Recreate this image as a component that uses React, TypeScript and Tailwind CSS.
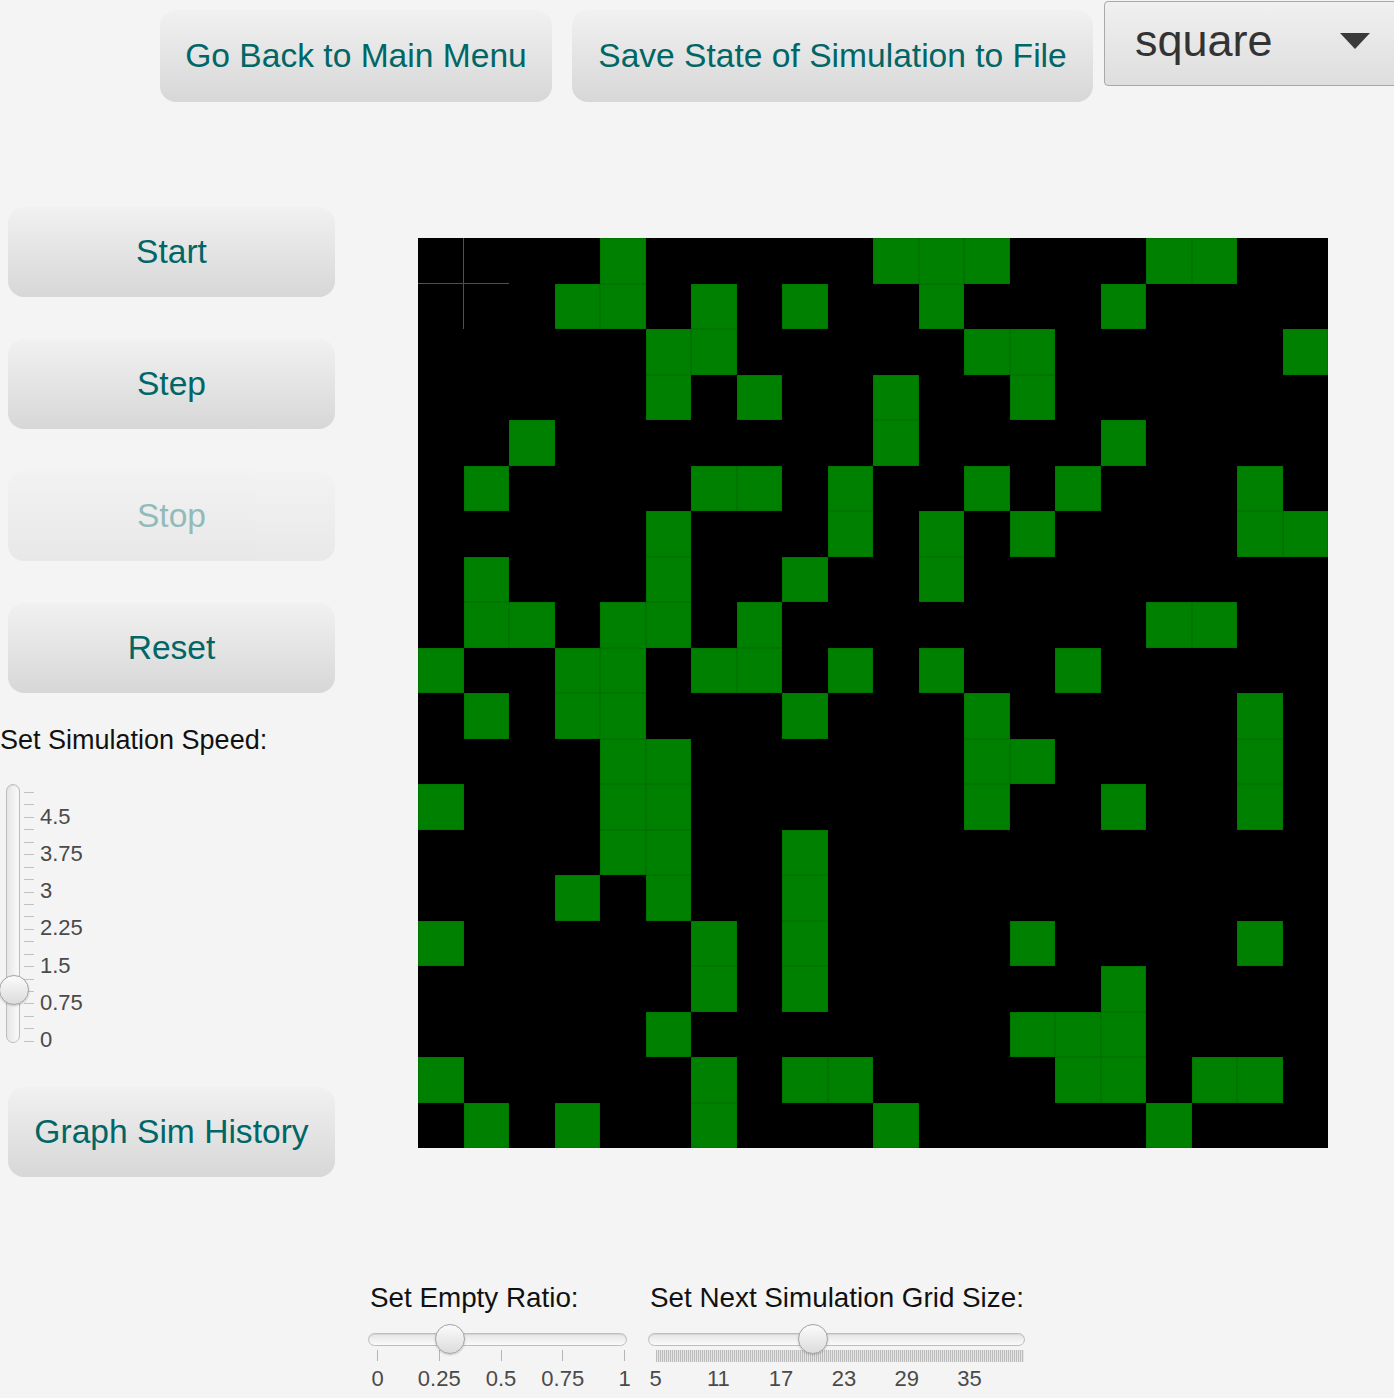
const GREEN: Record<number, number[]> = {
  0: [4, 10, 11, 12, 16, 17],
  1: [3, 4, 6, 8, 11, 15],
  2: [5, 6, 12, 13, 19],
  3: [5, 7, 10, 13],
  4: [2, 10, 15],
  5: [1, 6, 7, 9, 12, 14, 18],
  6: [5, 9, 11, 13, 18, 19],
  7: [1, 5, 8, 11],
  8: [1, 2, 4, 5, 7, 16, 17],
  9: [0, 3, 4, 6, 7, 9, 11, 14],
  10: [1, 3, 4, 8, 12, 18],
  11: [4, 5, 12, 13, 18],
  12: [0, 4, 5, 12, 15, 18],
  13: [4, 5, 8],
  14: [3, 5, 8],
  15: [0, 6, 8, 13, 18],
  16: [6, 8, 15],
  17: [5, 13, 14, 15],
  18: [0, 6, 8, 9, 14, 15, 17, 18],
  19: [1, 3, 6, 10, 16],
};

const speedLabels = ["4.5", "3.75", "3", "2.25", "1.5", "0.75", "0"];
const ratioLabels = ["0", "0.25", "0.5", "0.75", "1"];
const sizeLabels = ["5", "11", "17", "23", "29", "35"];

const Button = ({
  label,
  className,
  disabled,
}: {
  label: string;
  className?: string;
  disabled?: boolean;
}) => (
  <button
    className={`flex shrink-0 items-center justify-center rounded-[16px] bg-linear-to-b from-[#f1f1f1] to-[#d7d7d7] text-[33.6px] text-[#006666] ${
      disabled ? "opacity-40" : ""
    } ${className ?? ""}`}
  >
    {label}
  </button>
);

const Thumb = ({ className }: { className: string }) => (
  <div
    className={`absolute h-[30px] w-[30px] rounded-full border border-[#a3a3a3] bg-linear-to-b from-[#fbfbfb] to-[#dcdcdc] shadow-[0_1px_2px_rgba(0,0,0,0.2)] ${className}`}
  />
);

const Track = ({ className }: { className: string }) => (
  <div
    className={`rounded-full border border-[#bdbdbd] bg-linear-to-b from-[#e6e6e6] to-[#fafafa] shadow-[inset_0_1px_1px_rgba(0,0,0,0.08)] ${className}`}
  />
);

export default function App() {
  return (
    <div className="h-[1398px] w-[1394px] overflow-hidden bg-[#f4f4f4] font-['Liberation_Sans',Arial,sans-serif]">
      {/* top bar */}
      <div className="flex items-start">
        <Button label="Go Back to Main Menu" className="ml-[160px] mt-[10px] h-[92px] w-[392px]" />
        <Button
          label="Save State of Simulation to File"
          className="ml-[20px] mt-[10px] h-[92px] w-[521px]"
        />
        <div className="ml-[11px] mt-[1px] flex h-[85px] w-[300px] shrink-0 items-center rounded-[4px] border border-[#a9a9a9] bg-linear-to-b from-[#f0f0f0] to-[#dedede] pl-[30px]">
          <span className="-mt-[6px] text-[45px] leading-none text-[#333]">square</span>
          <svg width="30" height="16" viewBox="0 0 30 16" className="-mt-[6px] ml-[67px]">
            <polygon points="0,0 30,0 15,16" fill="#3a3a3a" />
          </svg>
        </div>
      </div>

      {/* main */}
      <div className="mt-[105px] flex items-start">
        <div className="flex w-[336px] shrink-0 flex-col">
          <Button label="Start" className="ml-[8px] h-[90px] w-[327px]" />
          <Button label="Step" className="ml-[8px] mt-[42px] h-[90px] w-[327px]" />
          <Button label="Stop" disabled className="ml-[8px] mt-[42px] h-[90px] w-[327px]" />
          <Button label="Reset" className="ml-[8px] mt-[42px] h-[90px] w-[327px]" />
          <div className="mt-[32px] text-[27px] leading-[30px] text-[#111]">Set Simulation Speed:</div>
          <div className="relative mt-[29px] flex h-[268px] items-start">
            <Track className="ml-[6px] h-[259px] w-[14px] bg-linear-to-r" />
            <div className="ml-[4px] mt-[8px] flex h-[250px] w-[10px] flex-col justify-between">
              {Array.from({ length: 21 }).map((_, i) => (
                <div key={i} className="h-px w-full bg-[#c2c2c2]" />
              ))}
            </div>
            <div className="ml-[6px] mt-[21px] flex h-[247px] flex-col justify-between text-[22px] leading-[24px] text-[#4a4a4a]">
              {speedLabels.map((l) => (
                <span key={l}>{l}</span>
              ))}
            </div>
            <Thumb className="left-[-1px] top-[191px]" />
          </div>
          <Button label="Graph Sim History" className="ml-[8px] mt-[35px] h-[90px] w-[327px]" />
        </div>

        <div className="ml-[82px] mt-[31px] grid h-[910px] w-[910px] shrink-0 grid-cols-20 grid-rows-20 bg-black">
          {Array.from({ length: 400 }).map((_, k) => {
            const r = Math.floor(k / 20);
            const c = k % 20;
            const on = GREEN[r].includes(c);
            let edge = "";
            if (r === 0 && c === 0) edge = "shadow-[inset_-1px_-1px_0_#505050]";
            else if (r === 1 && c === 0) edge = "shadow-[inset_-1px_0_0_#505050]";
            else if (r === 0 && c === 1) edge = "shadow-[inset_0_-1px_0_#505050]";
            return (
              <div
                key={k}
                className={
                  on ? "bg-[#008000] shadow-[inset_0_0_0_0.5px_#016c01]" : `bg-black ${edge}`
                }
              />
            );
          })}
        </div>
      </div>

      {/* bottom sliders */}
      <div className="ml-[368px] mt-[106px] flex items-start">
        <div className="flex w-[259px] shrink-0 flex-col">
          <div className="ml-[2px] whitespace-nowrap text-[27.8px] leading-[30px] text-[#111]">
            Set Empty Ratio:
          </div>
          <div className="relative mt-[20px]">
            <Track className="h-[13px] w-[259px]" />
            <Thumb className="left-[67px] top-[-9px]" />
          </div>
          <div className="mt-[4px] flex justify-between pl-[9px] pr-[2px]">
            {ratioLabels.map((l) => (
              <div key={l} className="flex w-px flex-col items-center">
                <div className="h-[11px] w-px shrink-0 bg-[#b5b5b5]" />
                <span className="mt-[6px] whitespace-nowrap text-[22px] leading-[24px] text-[#4a4a4a]">
                  {l}
                </span>
              </div>
            ))}
          </div>
        </div>

        <div className="ml-[21px] flex w-[377px] shrink-0 flex-col">
          <div className="ml-[2px] whitespace-nowrap text-[27.8px] leading-[30px] text-[#111]">
            Set Next Simulation Grid Size:
          </div>
          <div className="relative mt-[20px]">
            <Track className="h-[13px] w-[377px]" />
            <Thumb className="left-[150px] top-[-9px]" />
          </div>
          <div className="ml-[8px] mt-[4px] h-[12px] w-[368px] bg-[repeating-linear-gradient(90deg,#bcbcbc_0_1px,#e4e4e4_1px_2px)]" />
          <div className="mt-[5px] flex gap-[61.8px] pl-[7px]">
            {sizeLabels.map((l) => (
              <div key={l} className="flex w-px flex-col items-center">
                <span className="whitespace-nowrap text-[22px] leading-[24px] text-[#4a4a4a]">{l}</span>
              </div>
            ))}
          </div>
        </div>
      </div>
    </div>
  );
}
